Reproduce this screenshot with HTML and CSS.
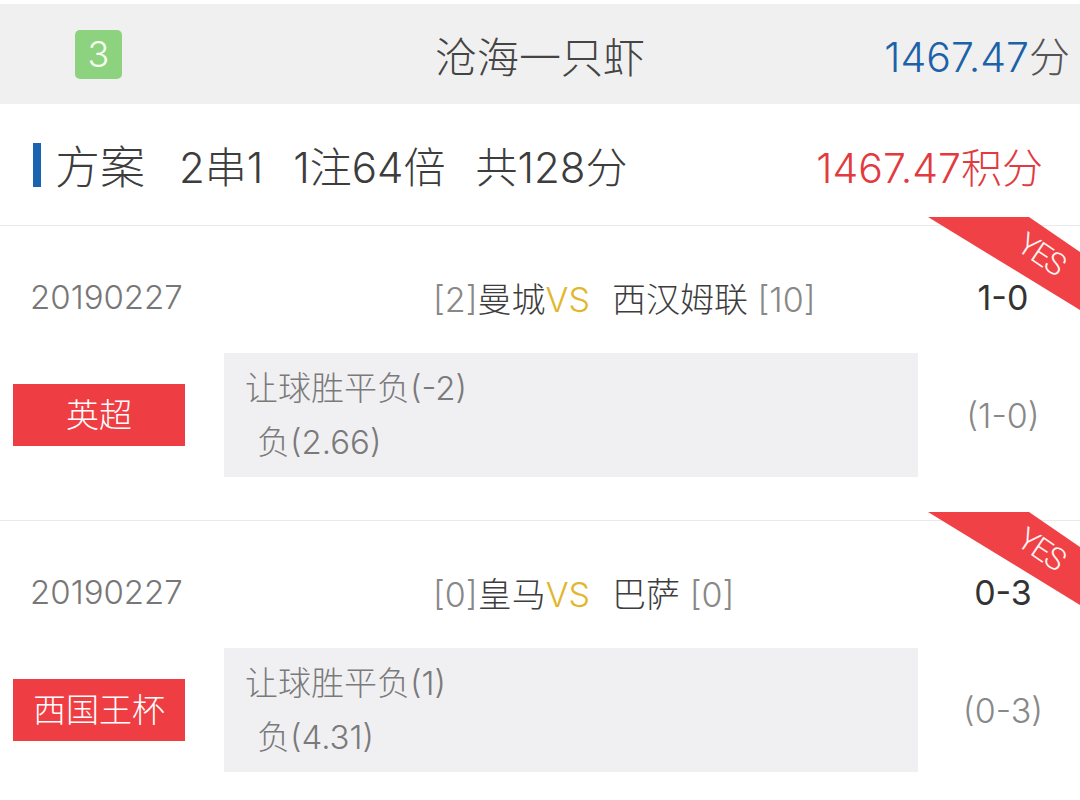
FILE: index.html
```html
<!DOCTYPE html>
<html lang="zh-CN">
<head>
<meta charset="utf-8">
<title>方案</title>
<link rel="stylesheet" href="styles.css">
</head>
<body>
<div class="page">
  <header class="top">
    <div class="rank">3</div>
    <div class="name">沧海一只虾</div>
    <div class="total"><span class="blue">1467.47</span>分</div>
  </header>

  <section class="plan">
    <span class="bar"></span>
    <span class="plan-title">方案</span>
    <span class="plan-item">2串1</span>
    <span class="plan-item">1注64倍</span>
    <span class="plan-item">共128分</span>
    <span class="plan-win">1467.47积分</span>
  </section>

  <section class="match">
    <div class="ribbon">
      <svg width="160" height="100" viewBox="0 0 160 100">
        <polygon points="8,0 109,0 160,35 160,93" fill="#ef4146"/>
        <text x="0" y="0" transform="translate(121 37) rotate(34)" text-anchor="middle" dominant-baseline="central" class="yes">YES</text>
      </svg>
    </div>
    <div class="row-head">
      <div class="date">20190227</div>
      <div class="teams"><span class="rk">[2]</span>曼城<span class="vs">VS</span><span class="away">西汉姆联</span> <span class="rk">[10]</span></div>
      <div class="score">1-0</div>
    </div>
    <div class="row-body">
      <div class="tag-cell"><span class="tag">英超</span></div>
      <div class="pick">
        <div class="pick-line">让球胜平负(-2)</div>
        <div class="pick-line sub">负(2.66)</div>
      </div>
      <div class="half">(1-0)</div>
    </div>
  </section>

  <section class="match">
    <div class="ribbon">
      <svg width="160" height="100" viewBox="0 0 160 100">
        <polygon points="8,0 109,0 160,35 160,93" fill="#ef4146"/>
        <text x="0" y="0" transform="translate(121 37) rotate(34)" text-anchor="middle" dominant-baseline="central" class="yes">YES</text>
      </svg>
    </div>
    <div class="row-head">
      <div class="date">20190227</div>
      <div class="teams"><span class="rk">[0]</span>皇马<span class="vs">VS</span><span class="away">巴萨</span> <span class="rk">[0]</span></div>
      <div class="score">0-3</div>
    </div>
    <div class="row-body">
      <div class="tag-cell"><span class="tag">西国王杯</span></div>
      <div class="pick">
        <div class="pick-line">让球胜平负(1)</div>
        <div class="pick-line sub">负(4.31)</div>
      </div>
      <div class="half">(0-3)</div>
    </div>
  </section>
</div>
</body>
</html>
```

FILE: styles.css
```css
* { box-sizing: border-box; }
html, body { margin: 0; padding: 0; background: #ffffff; }
body {
  font-family: Inter, "Noto Sans CJK SC", sans-serif;
  font-weight: 300;
  color: #3d3d3d;
  width: 1080px;
  height: 800px;
  overflow: hidden;
}
.page { padding-top: 4px; }

.top {
  height: 100px;
  background: #f0f0f0;
  display: grid;
  grid-template-columns: 1fr auto 1fr;
  align-items: center;
  padding: 0 10px;
}
.rank {
  width: 47px;
  height: 49px;
  margin-left: 65px;
  background: #8dd27f;
  border-radius: 5px;
  color: #f4fff0;
  font-size: 36px;
  line-height: 49px;
  text-align: center;
  justify-self: start;
}
.name {
  font-size: 42px;
  color: #444;
}
.total {
  justify-self: end;
  font-size: 41px;
  color: #555;
}
.blue { color: #1b62a8; }

.plan {
  height: 122px;
  display: flex;
  align-items: center;
  padding: 0 37px 0 33px;
  border-bottom: 1px solid #e9e9e9;
}
.bar {
  width: 8px;
  height: 44px;
  background: #1a63b0;
  margin-right: 14px;
}
.plan-title {
  font-size: 45px;
  color: #3d3d3d;
  margin-right: 34px;
}
.plan-item {
  font-size: 42px;
  color: #3d3d3d;
  margin-right: 30px;
}
.plan-win {
  margin-left: auto;
  font-size: 41px;
  color: #e23a3f;
}

.match {
  position: relative;
  padding: 41px 0 43px;
  border-bottom: 1px solid #e9e9e9;
}
.ribbon {
  position: absolute;
  top: -9px;
  right: 0;
  width: 160px;
  height: 100px;
}
.ribbon svg { display: block; }
.yes {
  fill: #fff4f2;
  font-family: Roboto, sans-serif;
  font-size: 31px;
  letter-spacing: -2px;
}

.row-head {
  height: 60px;
  display: grid;
  grid-template-columns: 433px 1fr 162px;
  align-items: center;
}
.date {
  padding-left: 30px;
  font-size: 33px;
  color: #777;
}
.teams {
  font-size: 34px;
  color: #3d3d3d;
  white-space: nowrap;
}
.rk { color: #888; }
.vs { color: #e3b62a; margin-right: 22px; }
.score {
  padding-left: 8px;
  text-align: center;
  font-size: 34px;
  font-weight: 400;
  color: #333;
}

.row-body {
  margin-top: 26px;
  display: grid;
  grid-template-columns: 224px 694px 162px;
  align-items: center;
}
.tag-cell { padding-left: 13px; }
.tag {
  display: block;
  width: 172px;
  height: 62px;
  line-height: 62px;
  background: #ef3e43;
  color: #fff;
  text-align: center;
  font-size: 33px;
}
.pick {
  height: 124px;
  background: #f0f0f2;
  padding: 8px 0 8px 21px;
}
.pick-line {
  line-height: 54px;
  font-size: 33px;
  color: #7a7a7a;
}
.pick-line.sub { padding-left: 12px; }
.half {
  padding-left: 8px;
  text-align: center;
  font-size: 34px;
  color: #888;
}
```
